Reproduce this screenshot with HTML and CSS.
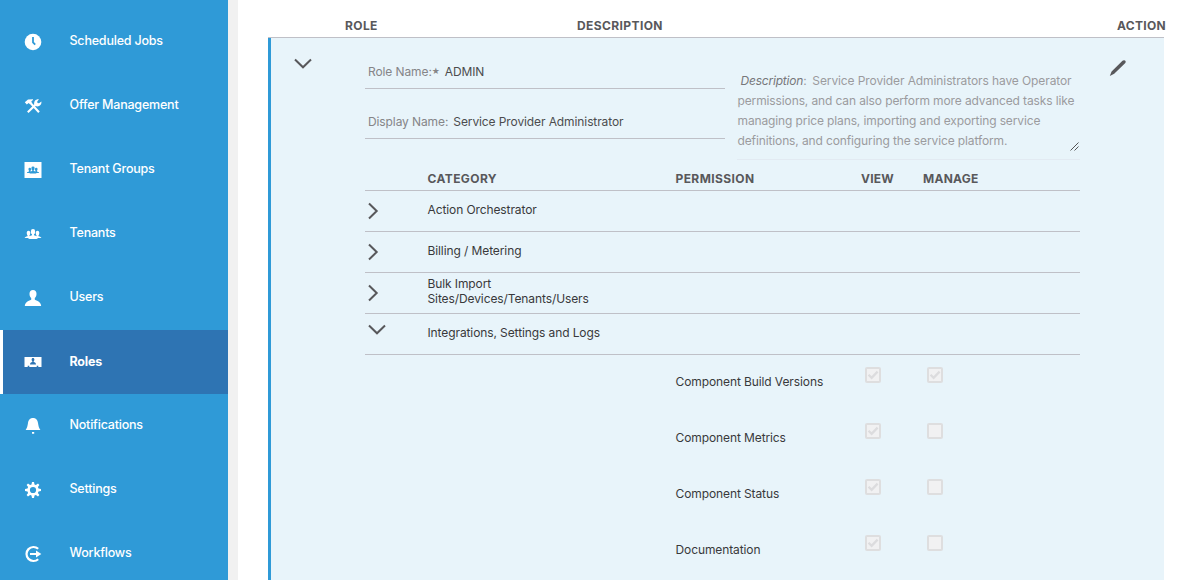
FILE: index.html
```html
<!DOCTYPE html>
<html lang="en">
<head>
<meta charset="utf-8">
<title>Roles</title>
<link rel="stylesheet" href="styles.css">
</head>
<body>
<svg width="0" height="0" class="defs">
  <symbol id="down" viewBox="0 0 18 12"><path d="M1 1.500 9 9.300 17 1.500" fill="none" stroke="#58585b" stroke-width="2"/></symbol>
  <symbol id="right" viewBox="0 0 12 18"><path d="M1 1.500 8.700 9 1 16.500" fill="none" stroke="#58585b" stroke-width="2"/></symbol>
  <symbol id="people" viewBox="0 0 18 18"><rect x="6.900" y="4" width="4.200" height="5.500" rx="2"/><rect x="2.800" y="5.800" width="3.400" height="4.500" rx="1.600"/><rect x="11.800" y="5.800" width="3.400" height="4.500" rx="1.600"/><path d="M8 8h2v2.300c1.200.2 2 .5 2.500.9V9.500h2v1.700c1.700.3 2.600.9 2.900 1.800h-3.500c-.3.600-.8 1-1.600 1H5.700c-.8 0-1.300-.4-1.600-1H.6c.3-.9 1.200-1.500 2.900-1.800V9.500h2v1.700c.5-.4 1.300-.7 2.500-.9z"/></symbol>
  <symbol id="check" viewBox="0 0 12 12"><path d="M1.600 5.800 4.600 8.800 10.600 2.600" fill="none" stroke="#dcdcde" stroke-width="2.300"/></symbol>
</svg>
<div class="app">
  <nav class="sidebar">
    <a class="item"><svg viewBox="0 0 18 18"><circle cx="9" cy="9" r="8.300"/><path class="cut" d="M9 4v5.300l2.200 2.400"/></svg><span>Scheduled Jobs</span></a>
    <a class="item"><svg viewBox="0 0 18 18"><path d="M.8 5.300 4 2.400l5-.2v.9L7.400 4.200l.3 1.600L6 7.300 4.700 6.100 2.800 7.500z"/><path class="tool" d="M6.500 6 15 15.300M3.800 15.300 12 7.300"/><path d="M10.200 7.500C9.700 4.300 11.600 2 15 2.300L13.200 4.500l.3 1.500 1.500.3 2.400-1.700c.4 3.200-1.800 5.200-5.200 4.700z"/></svg><span>Offer Management</span></a>
    <a class="item"><svg viewBox="0 0 18 18"><path d="M.5 1h17v16H.5z"/><use href="#people" class="blue" x="2.500" y="2.500" width="13" height="13"/></svg><span>Tenant Groups</span></a>
    <a class="item"><svg viewBox="0 0 18 18"><use href="#people"/></svg><span>Tenants</span></a>
    <a class="item"><svg viewBox="0 0 18 18"><path d="M9 1C6.800 1 5.500 2.500 5.500 4.700c0 2.100.6 3.300 1.700 4.400v1.600C4 12 1 13.300.8 17h16.400c-.2-3.700-3.200-5-6.400-6.300V9.100c1.100-1.100 1.700-2.300 1.700-4.400C12.500 2.500 11.200 1 9 1z"/></svg><span>Users</span></a>
    <a class="item active"><svg viewBox="0 0 18 18"><path d="M.5 4h17v10h-3.200v-1.200h-1.600V14H5.300v-1.200H3.700V14H.5z"/><path class="dark" d="M9 5c-1 0-1.400.7-1.400 1.600 0 .8.2 1.200.7 1.700v.8C7 9.500 6 10 6 11.500h6C12 10 11 9.500 9.700 9.100v-.8c.5-.5.7-.9.7-1.700C10.400 5.700 10 5 9 5z"/></svg><span>Roles</span></a>
    <a class="item"><svg viewBox="0 0 18 18"><path d="M9 1C5.800 1 4.400 3.200 4 6c-.4 3-1 5-2.400 7h14.800C15 11 14.400 9 14 6c-.4-2.800-1.800-5-5-5zM8 15h2.200v1.800H8z"/></svg><span>Notifications</span></a>
    <a class="item"><svg viewBox="0 0 18 18"><path fill-rule="evenodd" d="M8 1h2l.5 2.500 1.400.6 2.100-1.500 1.400 1.400-1.500 2.100.6 1.400L17 8v2l-2.500.5-.6 1.400 1.500 2.100-1.400 1.400-2.100-1.500-1.400.6L10 17H8l-.5-2.500-1.400-.6L4 15.400 2.600 14l1.500-2.100-.6-1.400L1 10V8l2.500-.5.6-1.400L2.600 4 4 2.600l2.100 1.500 1.400-.6zM9 5.900a3.100 3.100 0 1 0 0 6.200 3.100 3.100 0 0 0 0-6.200z"/></svg><span>Settings</span></a>
    <a class="item"><svg viewBox="0 0 18 18"><path class="line" d="M14.200 3.800A7 7 0 1 0 14.200 14.200M6 9h7"/><path d="M12 5.500 17.300 9 12 12.500z"/></svg><span>Workflows</span></a>
  </nav>
  <main class="main">
    <header class="heads"><b>ROLE</b><b>DESCRIPTION</b><b>ACTION</b></header>
    <section class="panel">
      <svg class="toggle" width="18" height="12"><use href="#down"/></svg>
      <div class="content">
        <div class="form">
          <div class="fields">
            <div class="field"><label>Role Name:<i class="star">★</i></label><span class="name">ADMIN</span></div>
            <div class="field"><label>Display Name:</label><span>Service Provider Administrator</span></div>
          </div>
          <div class="desc"><em>Description</em>:&nbsp;<span class="lead">Service Provider Administrators have Operator</span><br>permissions, and can also perform more advanced tasks like<br>managing price plans, importing and exporting service<br>definitions, and configuring the service platform.
            <svg class="grip" width="9" height="9" viewBox="0 0 9 9"><path d="M.5 8.500 8.500.5M4.500 8.500l4-4" stroke="#444" stroke-width=".9"/></svg></div>
        </div>
        <div class="row cats"><b>CATEGORY</b><b>PERMISSION</b><b>VIEW</b><b>MANAGE</b></div>
        <div class="row"><svg width="12" height="18"><use href="#right"/></svg><span>Action Orchestrator</span></div>
        <div class="row"><svg width="12" height="18"><use href="#right"/></svg><span>Billing / Metering</span></div>
        <div class="row"><svg width="12" height="18"><use href="#right"/></svg><span class="two">Bulk Import<br>Sites/Devices/Tenants/Users</span></div>
        <div class="row open"><svg width="18" height="12"><use href="#down"/></svg><span>Integrations, Settings and Logs</span></div>
        <div class="perm"><span>Component Build Versions</span><i class="box"><svg><use href="#check"/></svg></i><i class="box"><svg><use href="#check"/></svg></i></div>
        <div class="perm"><span>Component Metrics</span><i class="box"><svg><use href="#check"/></svg></i><i class="box"></i></div>
        <div class="perm"><span>Component Status</span><i class="box"><svg><use href="#check"/></svg></i><i class="box"></i></div>
        <div class="perm"><span>Documentation</span><i class="box"><svg><use href="#check"/></svg></i><i class="box"></i></div>
      </div>
      <svg class="pencil" width="18" height="18" viewBox="0 0 18 18"><path d="M.8 17 2.600 12.500 13.500 1.800q1.300-1.200 2.600-.2t.2 2.500L5.200 14.700z" fill="#58585b"/></svg>
    </section>
  </main>
</div>
</body>
</html>
```
FILE: styles.css
```css
* { box-sizing: border-box; }
body { margin: 0; background: #fff; color: #39393b; font: 12px/15px Inter, "Liberation Sans", sans-serif; letter-spacing: -.1px; overflow: hidden; }
.defs { position: absolute; }
.app { display: flex; height: 580px; overflow: hidden; }
.sidebar { width: 238px; flex: none; padding-top: 10px; background: #2f9ad7; border-right: 10px solid #f1f1f1; }
.item { display: flex; align-items: center; height: 64px; padding-left: 24px; color: #fff; font-weight: 500; font-size: 12.5px; letter-spacing: -.2px; }
.item svg { width: 18px; height: 18px; fill: #fff; margin-right: 27.5px; flex: none; }
.item span { margin-top: -3px; }
.item .cut { fill: none; stroke: #2f9ad7; stroke-width: 1.8; }
.item .line { fill: none; stroke: #fff; stroke-width: 2.2; }
.item .tool { fill: none; stroke: #fff; stroke-width: 2.1; }
.item .blue { fill: #2f9ad7; }
.item .dark { fill: #2e74b3; }
.item.active { background: #2e74b3; border-left: 3px solid #fff; padding-left: 21px; font-weight: 700; }
.item.active span { margin-top: -2px; }
.main { flex: 1; padding-left: 30px; white-space: nowrap; }
b { font-weight: 700; color: #58585b; letter-spacing: .4px; }
.heads { display: grid; grid-template-columns: 232px 540px 49px; width: 896px; height: 38px; padding: 18px 0 0 77px; border-bottom: 1px solid #bfc0c7; }
.heads b:last-child { letter-spacing: .3px; }
.panel { display: flex; width: 896px; height: 542px; border-left: 3px solid #2f9ad7; background: #e8f4fa; }
.toggle { flex: none; margin: 20px 0 0 23px; }
.content { width: 715px; flex: none; margin-left: 53px; }
.form { display: flex; height: 128px; }
.fields { width: 360px; }
.field { height: 50px; padding: 25px 3px 0; border-bottom: 1px solid #bfc0c7; display: flex; color: #4c4c4e; }
.field:first-child { height: 51px; padding-top: 26px; }
.field label { color: #858588; margin-right: 5px; }
.star { font: 9px/15px "DejaVu Sans", sans-serif; vertical-align: top; }
.desc { position: relative; width: 343px; height: 122px; margin-left: 12px; padding: 33px 0 0 .5px; line-height: 20px; color: #9b9b9e; letter-spacing: -.12px; border-bottom: 1px solid #e2eaf2; }
.desc em { color: #77777a; margin-left: 3px; letter-spacing: -.2px; }
.desc .lead { margin-left: 2.5px; letter-spacing: -.1px; }
.grip { position: absolute; right: 1px; bottom: 8px; }
.row { display: grid; grid-template-columns: 62.5px 1fr; align-items: center; height: 41px; border-bottom: 1px solid #bfc0c7; }
.row svg { margin-left: 3px; }
.row span { margin-top: -4px; }
.row .two { margin-top: -5px; }
.row.open svg { margin-top: -9px; }
.row.open span { margin-top: -3px; }
.cats { grid-template-columns: 248px 185.5px 62px 1fr; height: 25px; padding-left: 62.5px; }
.cats b:nth-child(n+3) { letter-spacing: .25px; }
.perm { display: grid; grid-template-columns: 189.5px 62px 16px; height: 56px; padding: 12px 0 0 310.5px; }
.perm span { padding-top: 7px; }
.box { width: 16px; height: 16px; border: 2px solid #dededf; border-radius: 2px; background: #f1f1f2; }
.box svg { display: block; width: 12px; height: 12px; }
.pencil { margin: 21px 0 0 29px; }
```
